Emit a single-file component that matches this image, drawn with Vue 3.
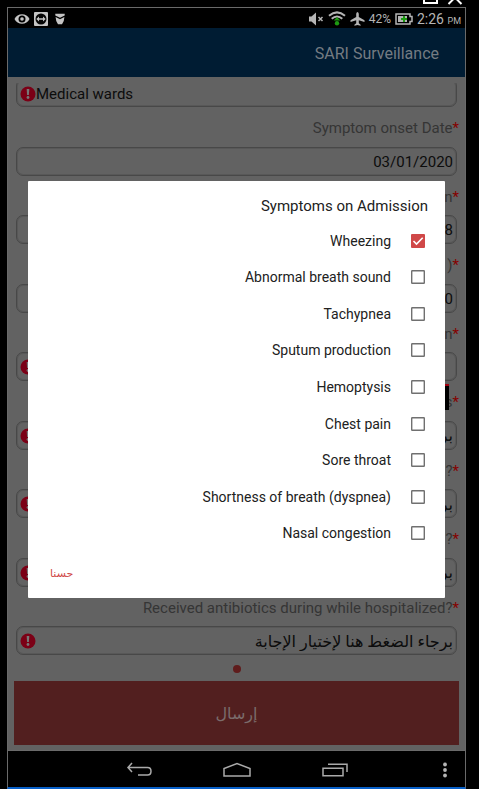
<script setup>
import { ref } from 'vue'

const prompt = 'برجاء الضغط هنا لإختيار الإجابة'

const fields = [
  { kind: 'select', value: 'Medical wards', error: true },
  { label: 'Symptom onset Date', kind: 'text', value: '03/01/2020' },
  { label: 'n', kind: 'text', value: '8' },
  { label: ')', kind: 'text', value: '0' },
  { label: 'n', kind: 'text', value: '', error: true },
  { label: 's', kind: 'select', value: prompt, rtl: true, error: true },
  { label: '?', kind: 'select', value: prompt, rtl: true, error: true },
  { label: '?', kind: 'select', value: prompt, rtl: true, error: true },
  { label: 'Received antibiotics during while hospitalized?', kind: 'select', value: prompt, rtl: true, error: true },
]

const symptoms = ref([
  { name: 'Wheezing', on: true },
  { name: 'Abnormal breath sound', on: false },
  { name: 'Tachypnea', on: false },
  { name: 'Sputum production', on: false },
  { name: 'Hemoptysis', on: false },
  { name: 'Chest pain', on: false },
  { name: 'Sore throat', on: false },
  { name: 'Shortness of breath (dyspnea)', on: false },
  { name: 'Nasal congestion', on: false },
])
</script>

<template>
  <div class="page">
    <div class="window-bar">
      <svg width="40" height="5" viewBox="0 0 40 5">
        <path d="M1 0V3H14V0" fill="none" stroke="#fff" stroke-width="2" />
        <path d="M25.500 4L32 -2.500L38.500 4" fill="none" stroke="#fff" stroke-width="2" />
      </svg>
    </div>
    <div class="device">
      <div class="status">
        <div class="group">
          <svg width="16" height="12" viewBox="0 0 16 12">
            <path d="M.5 6C3-.3 13-.3 15.500 6C13 12.300 3 12.300 .5 6Z" fill="#c4c4c4" />
            <circle cx="8" cy="6" r="3.500" fill="#000" />
            <circle cx="8" cy="6" r="1.800" fill="#c4c4c4" />
          </svg>
          <svg width="14" height="14" viewBox="0 0 14 14">
            <rect width="14" height="14" rx="1" fill="#c4c4c4" />
            <circle cx="7" cy="7" r="5.500" fill="#050505" />
            <path d="M2.300 7L5 4.600V6.200H9V4.600L11.700 7L9 9.400V7.800H5V9.400Z" fill="#c4c4c4" />
          </svg>
          <svg class="shield" width="10" height="12" viewBox="0 0 10 12">
            <path d="M.3 .8H9.700V2.600L5 4.800L.3 2.600Z" fill="#c4c4c4" />
            <path d="M.6 4L5 6.200L9.400 4Q9.200 9 7 11.300H3Q.8 9 .6 4Z" fill="#c4c4c4" />
          </svg>
        </div>
        <div class="group right">
          <svg width="16" height="14" viewBox="0 0 16 14">
            <path d="M1 4.500H3.500L8 .5V13.500L3.500 9.500H1Z" fill="#b5b5b5" />
            <path d="M10.500 5L14.500 9M14.500 5L10.500 9" stroke="#b5b5b5" stroke-width="1.500" />
          </svg>
          <svg class="wifi" width="18" height="15" viewBox="0 0 18 15">
            <path d="M1 4.800Q9-2 17 4.800M3.700 7.800Q9 3.200 14.300 7.800" fill="none" stroke="#b5b5b5" stroke-width="2" />
            <path d="M9 6L12.300 9.500H5.700Z" fill="#1d9a12" />
            <circle cx="9" cy="12.200" r="2.200" fill="#1d9a12" />
          </svg>
          <svg class="plane" width="15" height="14" viewBox="0 0 15 14">
            <path d="M7.500 0Q8.800 .4 8.800 2V5L14.500 8.300V9.900L8.800 8.200V11.300L10.600 12.700V13.800L7.500 13L4.400 13.800V12.700L6.200 11.300V8.200L.5 9.900V8.300L6.200 5V2Q6.200 .4 7.500 0Z" fill="#b5b5b5" />
          </svg>
          <span class="pct">42%</span>
          <svg class="battery" width="18" height="12" viewBox="0 0 18 12">
            <path d="M1 1H15V3.500H17V8.500H15V11H1Z" fill="none" stroke="#b5b5b5" stroke-width="1.500" />
            <rect x="3" y="3" width="9" height="6" fill="#b5b5b5" />
            <path d="M9 3V9M6 6H12" stroke="#1d9a12" stroke-width="2" />
          </svg>
          <span class="clock">2:26 <small>PM</small></span>
        </div>
      </div>

      <div class="screen">
        <header class="app-bar"><h1>SARI Surveillance</h1></header>
        <form class="content" @submit.prevent>
          <div class="scroller">
            <div class="fields">
              <div v-for="(f, i) in fields" :key="i" class="row">
                <label v-if="f.label" :for="'f' + i">{{ f.label }}<b>*</b></label>
                <div class="field">
                  <svg v-if="f.error" class="error" width="16" height="16" viewBox="0 0 16 16">
                    <circle cx="8" cy="8" r="7.500" fill="#7b0016" />
                    <path d="M6.700 3H9.300L8.900 9H7.100Z" fill="#777" />
                    <circle cx="8" cy="11.500" r="1.400" fill="#777" />
                  </svg>
                  <select v-if="f.kind === 'select'" :id="'f' + i" :class="{ rtl: f.rtl }" :aria-label="f.label ? undefined : f.value">
                    <option>{{ f.value }}</option>
                  </select>
                  <input v-else :id="'f' + i" type="text" :value="f.value">
                </div>
              </div>
            </div>
          </div>
          <div class="pager"><i></i></div>
          <button class="send" type="submit">إرسال</button>
        </form>

        <div class="overlay">
          <div class="caret"></div>
          <section class="dialog" role="dialog" aria-labelledby="dlg">
            <h2 id="dlg">Symptoms on Admission</h2>
            <ul>
              <li v-for="s in symptoms" :key="s.name">
                <label><span>{{ s.name }}</span><input v-model="s.on" type="checkbox"><svg width="14" height="14" viewBox="0 0 14 14">
                  <template v-if="s.on">
                    <rect width="14" height="14" rx="1" fill="#d04848" />
                    <path d="M2.500 7L5.500 10L11.700 3.800" fill="none" stroke="#fff" stroke-width="1.600" />
                  </template>
                  <rect v-else x=".7" y=".7" width="12.600" height="12.600" rx=".5" fill="none" stroke="#707070" stroke-width="1.400" />
                </svg></label>
              </li>
            </ul>
            <footer><button type="button">حسنا</button></footer>
          </section>
        </div>
      </div>

      <nav class="nav">
        <button type="button" class="back" aria-label="Back">
          <svg width="26" height="16" viewBox="0 0 26 16">
            <path d="M6 1L2 5.500L6 10M2 5.500H21.500Q25 5.500 25 9.200Q25 13 21.500 13H12" fill="none" stroke="#aaa" stroke-width="1.500" />
          </svg>
        </button>
        <button type="button" aria-label="Home">
          <svg width="28" height="16" viewBox="0 0 28 16">
            <path d="M1 14V6.500L14 1.500L27 6.500V14Z" fill="none" stroke="#aaa" stroke-width="1.500" />
          </svg>
        </button>
        <button type="button" aria-label="Recent apps">
          <svg width="26" height="16" viewBox="0 0 26 16">
            <path d="M1 6.200H21V13.800H1ZM6 2.200H25V10" fill="none" stroke="#aaa" stroke-width="1.500" />
          </svg>
        </button>
        <button type="button" class="more" aria-label="More">
          <svg width="4" height="16" viewBox="0 0 4 16" fill="#b5b5b5">
            <circle cx="2" cy="2.500" r="1.900" /><circle cx="2" cy="8" r="1.900" /><circle cx="2" cy="13.500" r="1.900" />
          </svg>
        </button>
      </nav>
    </div>
  </div>
</template>

<style>
body { background: #000; }
</style>

<style scoped>
.page {
  min-height: 100vh;
  box-sizing: border-box;
  display: flex;
  flex-direction: column;
  padding: 0 13px 0 7px;
  background: #000;
  font-family: Roboto, "DejaVu Sans", sans-serif;
}
.page * { box-sizing: border-box; }
svg { display: block; flex: none; }
button, input, select { font-family: inherit; margin: 0; padding: 0; border: 0; background: none; outline: none; }
h1, h2, ul { margin: 0; padding: 0; font-weight: 400; list-style: none; }

.window-bar { height: 7px; display: flex; justify-content: flex-end; padding-right: 3px; }
.device {
  flex: 1;
  display: flex;
  flex-direction: column;
  border: 1px solid #6a6a6a;
  border-bottom: 2px solid #0860c8;
}
.status {
  height: 20px;
  display: flex;
  justify-content: space-between;
  align-items: center;
  padding: 1px 4px 0 6px;
  color: #b5b5b5;
}
.group { display: flex; align-items: center; gap: 4px; }
.shield { margin-left: 3px; }
.pct { font-size: 12px; }
.clock { font-size: 14px; }
.clock small { font-size: 9px; }

.screen { flex: 1; display: flex; flex-direction: column; position: relative; background: #626262; }
.app-bar {
  height: 49px;
  display: flex;
  align-items: center;
  justify-content: flex-end;
  padding: 2px 26px 0 0;
  background: #001c33;
}
.app-bar h1 { font-size: 16px; color: #747b82; }
.content { flex: 1; display: flex; flex-direction: column; padding: 6px 6px 5px; }
.scroller { flex: 1; display: flex; flex-direction: column; overflow: hidden; }
.fields { flex: 1; display: grid; grid-template-rows: 28px repeat(8, 1fr); margin-top: -4px; }
.row { display: flex; flex-direction: column; justify-content: flex-end; }
.row label {
  flex: 1;
  display: flex;
  align-items: center;
  justify-content: flex-end;
  padding-top: 3px;
  font-size: 15px;
  color: #353535;
}
.row label b { font-weight: 400; color: #850000; }
.field {
  height: 29px;
  display: flex;
  align-items: center;
  margin: 0 2px;
  padding: 1px 3px 0;
  border: 1px solid #484848;
  border-radius: 7px;
  box-shadow: inset 0 0 0 1px #585858;
}
.field input, .field select {
  flex: 1;
  min-width: 0;
  height: 24px;
  appearance: none;
  font-size: 15px;
  color: #0c0c0c;
}
.field input { text-align: right; }
.field .rtl { direction: rtl; font-size: 16px; }
.pager { height: 26px; display: flex; align-items: center; justify-content: center; padding-top: 2px; }
.pager i { width: 8px; height: 8px; border-radius: 4px; background: #5f1c1c; }
.send { height: 64px; background: #521f1f; color: #7b6c6c; font-size: 16px; }

.overlay { position: absolute; inset: 0; display: grid; align-items: center; padding: 0 20px; }
.caret {
  position: absolute;
  right: 16px;
  top: 356px;
  width: 4px;
  height: 26px;
  background: #000;
  border-top: 2px solid #a00010;
}
.dialog { background: #fff; border-radius: 1px; color: #212121; }
.dialog h2 { height: 42px; padding: 16px 17px 0 0; font-size: 15px; line-height: 18px; text-align: right; }
.dialog ul { height: 329px; display: grid; grid-auto-rows: 1fr; }
.dialog li label {
  height: 100%;
  display: flex;
  align-items: center;
  justify-content: flex-end;
  gap: 20px;
  padding-right: 20px;
  font-size: 14px;
  position: relative;
}
.dialog li input { position: absolute; right: 20px; width: 14px; height: 14px; opacity: 0; }
.dialog footer { height: 46px; display: flex; align-items: center; padding: 0 0 2px 22px; }
.dialog footer button { font-size: 11px; color: #d04848; }

.nav {
  height: 37px;
  display: grid;
  grid-template-columns: 1fr 98px 98px 98px 1fr;
  align-items: center;
  padding-top: 2px;
  border-top: 1px solid #6a6a6a;
}
.nav button { display: flex; justify-content: center; }
.nav .back { grid-column: 2; }
.nav .more { justify-content: flex-end; padding-right: 18px; }
</style>
